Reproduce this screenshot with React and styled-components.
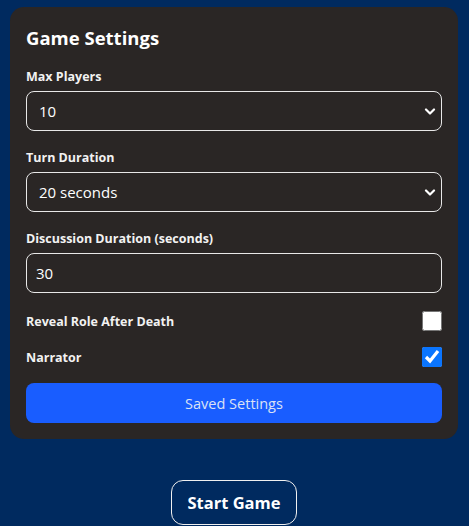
import React from 'react';
import styled, { createGlobalStyle } from 'styled-components';

const GlobalStyle = createGlobalStyle`
  html, body {
    margin: 0;
    padding: 0;
    background: #002a5f;
    font-family: "Open Sans", "Noto Sans", sans-serif;
  }
`;

const Page = styled.div`
  min-height: 526px;
  padding: 7px 11px 0 10px;
  box-sizing: border-box;
  display: flex;
  flex-direction: column;
  align-items: center;
`;

const Panel = styled.div`
  width: 100%;
  box-sizing: border-box;
  background: #2a2625;
  border-radius: 14px;
  padding: 17px 16px 16px 16px;
  display: flex;
  flex-direction: column;
`;

const Title = styled.h2`
  margin: 0 0 16px 0;
  color: #ffffff;
  font-size: 18.5px;
  line-height: 28px;
  font-weight: 700;
`;

const Field = styled.div`
  display: flex;
  flex-direction: column;
  margin-bottom: 18px;
`;

const Label = styled.label`
  color: #f2f2f2;
  font-size: 12.5px;
  font-weight: 700;
  line-height: 18px;
  margin-bottom: 5px;
`;

const SelectWrap = styled.div`
  position: relative;
  height: 40px;
`;

const Select = styled.select`
  appearance: none;
  width: 100%;
  height: 40px;
  box-sizing: border-box;
  background: #2a2625;
  color: #ffffff;
  border: 1px solid #e8e8e8;
  border-radius: 8px;
  padding: 0 30px 0 12px;
  font-family: inherit;
  font-size: 15px;
  outline: none;
`;

const Chevron = styled.svg`
  position: absolute;
  right: 5px;
  top: 17px;
  pointer-events: none;
`;

const TextInput = styled.input`
  width: 100%;
  height: 40px;
  box-sizing: border-box;
  background: #2a2625;
  color: #ffffff;
  border: 1px solid #e8e8e8;
  border-radius: 8px;
  padding: 0 9px;
  font-family: inherit;
  font-size: 15px;
  outline: none;
`;

const CheckRow = styled.label`
  display: flex;
  align-items: center;
  justify-content: space-between;
  height: 20px;
  margin-bottom: 16px;
  color: #f2f2f2;
  font-size: 12.5px;
  font-weight: 700;
`;

const Check = styled.input`
  width: 20px;
  height: 20px;
  margin: 0;
  accent-color: #0a75ff;
`;

const SaveButton = styled.button`
  height: 40px;
  border: none;
  border-radius: 8px;
  background: #195dff;
  color: #dbe2f5;
  font-family: inherit;
  font-size: 14.5px;
  cursor: pointer;
`;

const StartButton = styled.button`
  margin-top: 41px;
  width: 126px;
  height: 45px;
  background: transparent;
  border: 1px solid #f0f0f0;
  border-radius: 12px;
  color: #ffffff;
  font-family: inherit;
  font-size: 16.5px;
  font-weight: 700;
  cursor: pointer;
`;

function ChevronIcon() {
  return (
    <Chevron width="14" height="8" viewBox="0 0 14 8">
      <path d="M3 1.5 L7 5.5 L11 1.5" fill="none" stroke="#ffffff" strokeWidth="2.2" strokeLinecap="round" strokeLinejoin="round" />
    </Chevron>
  );
}

export default function App() {
  const [maxPlayers, setMaxPlayers] = React.useState('10');
  const [turn, setTurn] = React.useState('20');
  const [discussion, setDiscussion] = React.useState('30');
  const [reveal, setReveal] = React.useState(false);
  const [narrator, setNarrator] = React.useState(true);

  return (
    <Page>
      <GlobalStyle />
      <Panel>
        <Title>Game Settings</Title>
        <Field>
          <Label>Max Players</Label>
          <SelectWrap>
            <Select value={maxPlayers} onChange={(e) => setMaxPlayers(e.target.value)}>
              {[4, 5, 6, 7, 8, 9, 10, 11, 12].map((n) => (
                <option key={n} value={String(n)}>{n}</option>
              ))}
            </Select>
            <ChevronIcon />
          </SelectWrap>
        </Field>
        <Field>
          <Label>Turn Duration</Label>
          <SelectWrap>
            <Select value={turn} onChange={(e) => setTurn(e.target.value)}>
              {[10, 20, 30, 60].map((n) => (
                <option key={n} value={String(n)}>{n} seconds</option>
              ))}
            </Select>
            <ChevronIcon />
          </SelectWrap>
        </Field>
        <Field>
          <Label>Discussion Duration (seconds)</Label>
          <TextInput type="text" value={discussion} onChange={(e) => setDiscussion(e.target.value)} />
        </Field>
        <CheckRow>
          Reveal Role After Death
          <Check type="checkbox" checked={reveal} onChange={(e) => setReveal(e.target.checked)} />
        </CheckRow>
        <CheckRow>
          Narrator
          <Check type="checkbox" checked={narrator} onChange={(e) => setNarrator(e.target.checked)} />
        </CheckRow>
        <SaveButton>Saved Settings</SaveButton>
      </Panel>
      <StartButton>Start Game</StartButton>
    </Page>
  );
}
